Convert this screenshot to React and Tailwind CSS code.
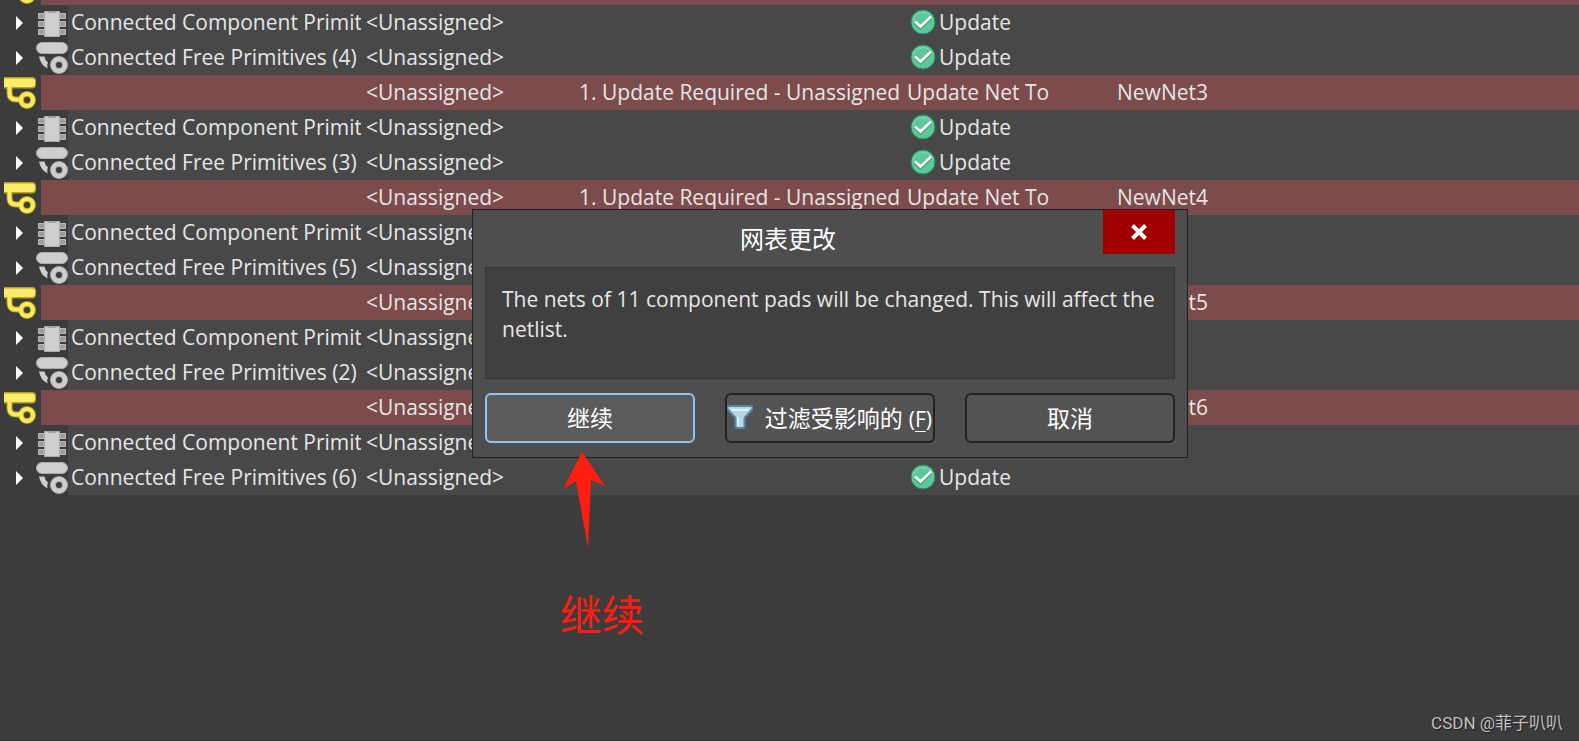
import React from "react";

const rows = [
  { type: "net", net: "NewNet2" },
  { type: "component", label: "Connected Component Primitives (1)" },
  { type: "free", label: "Connected Free Primitives (4)" },
  { type: "net", net: "NewNet3" },
  { type: "component", label: "Connected Component Primitives (1)" },
  { type: "free", label: "Connected Free Primitives (3)" },
  { type: "net", net: "NewNet4" },
  { type: "component", label: "Connected Component Primitives (1)" },
  { type: "free", label: "Connected Free Primitives (5)" },
  { type: "net", net: "NewNet5" },
  { type: "component", label: "Connected Component Primitives (1)" },
  { type: "free", label: "Connected Free Primitives (2)" },
  { type: "net", net: "NewNet6" },
  { type: "component", label: "Connected Component Primitives (1)" },
  { type: "free", label: "Connected Free Primitives (6)" },
];

export default function App() {
  return (
    <div className="relative min-h-screen overflow-hidden bg-[#3c3c3c] border-b border-[#303030] text-[21px] text-[#e6e6e6] font-['Open_Sans','Noto_Sans_CJK_SC',sans-serif]">
      {/* Net list, scrolled so the first row is mostly out of view */}
      <table className="-mt-[30px] w-full table-fixed border-collapse">
        <colgroup>
          <col className="w-[361px]" />
          <col className="w-[213px]" />
          <col className="w-[328px]" />
          <col className="w-[210px]" />
          <col />
        </colgroup>
        <tbody>
          {rows.map((row, i) =>
            row.type === "net" ? <NetRow key={i} net={row.net} /> : <PrimitiveRow key={i} {...row} />
          )}
        </tbody>
      </table>

      <NetlistDialog />

      {/* Callout */}
      <div className="absolute left-[560px] top-[452px] flex flex-col gap-8 text-[#ff1e10]">
        <svg width="50" height="96" viewBox="0 0 50 96" fill="currentColor">
          <path d="M22 0 L45 34 L31 28 L28 96 L16 29 L3 37 Z" />
        </svg>
        <span className="text-[42px] leading-[66px] font-['Noto_Sans_CJK_SC',sans-serif]">继续</span>
      </div>

      <div className="absolute right-4 bottom-1 text-[17px] leading-[26px] text-[#c0c0c0] [text-shadow:1px_1px_1px_#1c1c1c] font-['Roboto','Noto_Sans_CJK_SC',sans-serif]">
        CSDN @菲子叭叭
      </div>
    </div>
  );
}

const NetRow = ({ net }) => (
  <tr className="h-[35px] bg-[#7c4b4b] leading-[35px] whitespace-nowrap">
    <td className="p-0">
      <div className="flex h-[35px]">
        <div className="w-[41px] bg-[#3c3c3c] pl-1">
          <NetIcon />
        </div>
      </div>
    </td>
    <td className="p-0 pl-[5px]">&lt;Unassigned&gt;</td>
    <td className="p-0 pl-[5px]">1. Update Required - Unassigned</td>
    <td className="p-0 pl-[5px]">Update Net To</td>
    <td className="p-0 pl-[5px]">{net}</td>
  </tr>
);

const PrimitiveRow = ({ type, label }) => (
  <tr className="h-[35px] bg-[#484848] leading-[35px] whitespace-nowrap">
    <td className="p-0">
      <div className="flex h-[35px]">
        <div className="flex w-[68px] shrink-0 bg-[#3c3c3c] pl-4">
          <button aria-label={`Expand ${label}`} className="w-5 shrink-0">
            <svg width="8" height="14" viewBox="0 0 8 14" fill="#fff">
              <path d="M0 0 L7 7 L0 14 Z" />
            </svg>
          </button>
          {type === "component" ? <ChipIcon /> : <FreeIcon />}
        </div>
        <div className="flex-1 overflow-hidden pl-[3px]">{label}</div>
      </div>
    </td>
    <td className="p-0 pl-[5px]">&lt;Unassigned&gt;</td>
    <td className="p-0"></td>
    <td className="p-0 pl-2">
      <div className="flex items-center gap-[3px]">
        <CheckIcon />
        Update
      </div>
    </td>
    <td className="p-0"></td>
  </tr>
);

const NetlistDialog = () => (
  <div
    role="dialog"
    aria-labelledby="dialog-title"
    className="absolute left-[472px] top-[209px] w-[716px] border border-[#1e1e1e] bg-[#4e4e4e] pb-[14px]"
  >
    <div className="flex items-start pr-3">
      <h1 id="dialog-title" className="flex-1 text-center text-2xl leading-[57px] text-white">
        网表更改
      </h1>
      <button aria-label="Close" className="flex h-11 w-[72px] items-center justify-center bg-[#a00000]">
        <svg width="16" height="16" viewBox="0 0 16 16" stroke="#fff" strokeWidth="4">
          <path d="M1.5 1.5 L14.5 14.5 M14.5 1.5 L1.5 14.5" />
        </svg>
      </button>
    </div>
    <p className="mx-3 h-28 border border-[#333] bg-[#404040] px-4 py-4 leading-[30px]">
      The nets of 11 component pads will be changed. This will affect the netlist.
    </p>
    <div className="mx-3 mt-[14px] grid grid-cols-3 gap-[30px] text-[23px] text-white">
      <button className="h-[50px] rounded-md border-2 border-[#92c3f2] bg-[#5b5b5b]">继续</button>
      <button className="flex h-[50px] items-center justify-between rounded-md border-2 border-[#222] bg-[#535353] pr-px whitespace-nowrap">
        <FilterIcon />
        <span>
          过滤受影响的 <span className="text-[21px]">(<u className="underline-offset-4 decoration-1">F</u>)</span>
        </span>
      </button>
      <button className="h-[50px] rounded-md border-2 border-[#222] bg-[#535353]">取消</button>
    </div>
  </div>
);

const NetIcon = () => (
  <svg width="33" height="35" viewBox="0 0 33 35">
    <g fill="none" stroke="#b5a41c">
      <path d="M5.500 10 V18 Q5.500 24.500 12 24.500 H17" strokeWidth="6" />
      <circle cx="23" cy="25" r="6" strokeWidth="6" />
    </g>
    <path d="M0 2 H28 Q32 2 32 6 V9 Q32 13.500 28 13.500 H0 Z" fill="#b5a41c" />
    <path d="M0 3.500 H27.500 Q31 3.500 31 6.500 V9 Q31 12 27.500 12 H0 Z" fill="#fcec6c" />
    <g fill="none" stroke="#fbea60">
      <path d="M5.500 11 V18 Q5.500 24.500 12 24.500 H18" strokeWidth="4" />
      <circle cx="23" cy="25" r="6" strokeWidth="4" />
    </g>
  </svg>
);

const ChipIcon = () => (
  <svg width="30" height="35" viewBox="0 0 30 35" className="shrink-0">
    <g fill="#9b9b9b" stroke="#bcbcbc">
      <path d="M2.500 8.500 H8 V13.500 H2.500 Z M2.500 16.500 H8 V21.500 H2.500 Z M2.500 24.500 H8 V29.500 H2.500 Z" />
      <path d="M24 8.500 H29.500 V13.500 H24 Z M24 16.500 H29.500 V21.500 H24 Z M24 24.500 H29.500 V29.500 H24 Z" />
    </g>
    <rect x="8.500" y="6.500" width="15" height="25" fill="#cecece" stroke="#aaa" />
    <path d="M12 6 H20 V8 H12 Z" fill="#a3a3a3" />
  </svg>
);

const FreeIcon = () => (
  <svg width="32" height="35" viewBox="0 0 32 35" className="shrink-0">
    <rect x="0.500" y="2.500" width="31" height="11" rx="5.500" fill="#cecece" stroke="#adadad" />
    <path d="M3 16.500 H8.500 Q9 20.500 12 22.500 Q10.500 25 11.500 28.500 Q4.500 25 3 16.500 Z" fill="#cecece" />
    <circle cx="23" cy="25" r="6" fill="none" stroke="#adadad" strokeWidth="6" />
    <circle cx="23" cy="25" r="6" fill="none" stroke="#cecece" strokeWidth="4" />
  </svg>
);

const CheckIcon = () => (
  <svg width="26" height="26" viewBox="0 0 26 26" className="mb-0.5 shrink-0">
    <circle cx="13" cy="13" r="12" fill="#5bc897" stroke="#268a60" />
    <path d="M3 11 A10.500 10.500 0 0 1 23 11" fill="none" stroke="#87dbb6" />
    <path d="M5 13 L10.500 18 L21 8" fill="none" stroke="#309267" strokeWidth="4" />
    <path d="M5 12.500 L10.500 17.500 L21 7.500" fill="none" stroke="#fff" strokeWidth="3" />
  </svg>
);

const FilterIcon = () => (
  <svg width="26" height="24" viewBox="0 0 26 24" className="mb-0.5 shrink-0">
    <path d="M0.500 1 H25.500 V4 L17.500 13 V21 Q17.500 23 15.500 23 H10.500 Q8.500 23 8.500 21 V13 L0.500 4 Z" fill="#b5d9e4" stroke="#5786a6" strokeWidth="2" />
    <path d="M3 4 H23 L22 6 H4 Z" fill="#e0f2f5" />
    <path d="M10 12 V21 H12 V12 Z" fill="#dceff3" />
  </svg>
);
